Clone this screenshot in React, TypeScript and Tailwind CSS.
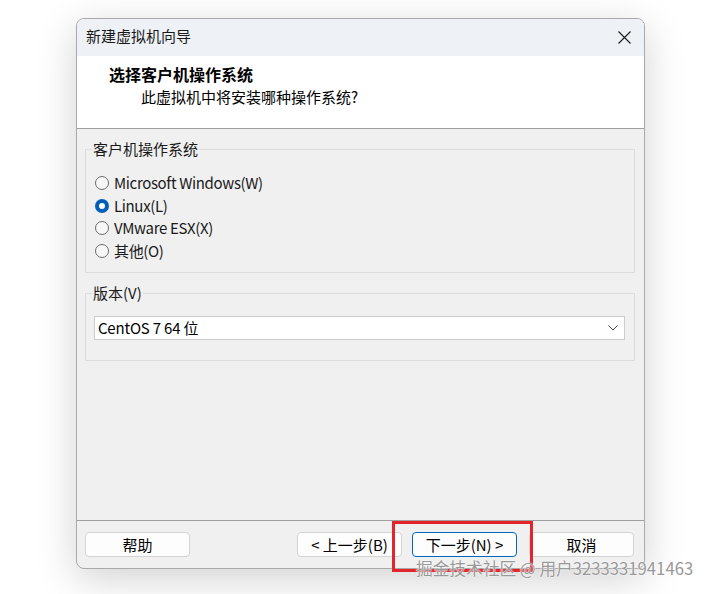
import React, { useState } from 'react';

const osOptions = [
  { key: 'windows', label: 'Microsoft Windows(W)' },
  { key: 'linux', label: 'Linux(L)' },
  { key: 'esx', label: 'VMware ESX(X)' },
  { key: 'other', label: '其他(O)' }
];

const Radio = ({ checked }: { checked: boolean }) =>
  checked ? (
    <span className="flex h-[14px] w-[14px] items-center justify-center rounded-full bg-[#005fb8]">
      <span className="h-[6px] w-[6px] rounded-full bg-white" />
    </span>
  ) : (
    <span className="h-[14px] w-[14px] rounded-full border border-[#6b6b6b] bg-[#f7f7f7]" />
  );

const Button = ({ label, primary }: { label: string; primary?: boolean }) => (
  <button
    className={`flex h-[25px] w-[105px] items-center justify-center rounded-[4px] border bg-[#fdfdfd] text-[15px] leading-[20px] text-black ${
      primary ? 'border-[#0067c0]' : 'border-[#d3d3d3]'
    }`}
  >
    {label}
  </button>
);

export default function App() {
  const [os, setOs] = useState('linux');

  return (
    <div
      className="relative h-[594px] w-[709px] overflow-hidden bg-white pl-[76px] pt-[18px]"
      style={{ fontFamily: '"Noto Sans CJK SC", "Noto Sans", sans-serif' }}
    >
      {/* dialog window */}
      <div className="flex h-[551px] w-[569px] flex-col overflow-hidden rounded-[8px] border border-[#a9a9a9] bg-[#f0f0f0] shadow-[0_10px_40px_rgba(0,0,0,0.18)]">
        {/* title bar */}
        <div className="flex h-[37px] items-center bg-[#eef2f6] pb-[4px]">
          <span className="pl-[9px] text-[15px] leading-[20px] text-[#1a1a1a]">新建虚拟机向导</span>
          <div className="ml-auto flex w-[40px] justify-center pt-[3px]">
            <svg width="13" height="13" viewBox="0 0 13 13" fill="none" stroke="#1b1b1b" strokeWidth="1.1">
              <path d="M0.5 0.5 L12.5 12.5 M12.5 0.5 L0.5 12.5" />
            </svg>
          </div>
        </div>

        {/* header */}
        <div className="h-[73px] border-b border-[#a0a0a0] bg-white pl-[32px] pt-[8px]">
          <div className="text-[16px] font-bold leading-[20px] text-black">选择客户机操作系统</div>
          <div className="mt-[3px] pl-[32px] text-[15px] leading-[20px] text-black">此虚拟机中将安装哪种操作系统?</div>
        </div>

        {/* body */}
        <div className="flex-1 px-[8px] pt-[10px]">
          <fieldset className="mr-[1px] border border-[#dcdcdc] pb-[10px] pl-[9px] pt-[13px]">
            <legend className="ml-[-3px] px-[1px] text-[15px] leading-[20px] text-[#1a1a1a]">客户机操作系统</legend>
            {osOptions.map((o) => (
              <label
                key={o.key}
                className="flex h-[22.5px] cursor-default items-center gap-[5px] text-[15px] text-[#1a1a1a]"
                onClick={() => setOs(o.key)}
              >
                <Radio checked={os === o.key} />
                <span className="leading-[20px] tracking-[-0.35px]">{o.label}</span>
              </label>
            ))}
          </fieldset>

          <fieldset className="mr-[1px] mt-[10px] border border-[#dcdcdc] pb-[20px] pl-[8px] pr-[9px] pt-[13px]">
            <legend className="ml-[-2px] px-[1px] text-[15px] leading-[20px] text-[#1a1a1a]">版本(V)</legend>
            <div className="flex h-[24px] items-center border border-[#cccccc] bg-white pl-[3px] pr-[6px]">
              <span className="text-[15px] leading-[20px] tracking-[-0.2px] text-black">CentOS 7 64 位</span>
              <svg className="ml-auto" width="10" height="6" viewBox="0 0 10 6" fill="none" stroke="#444" strokeWidth="1">
                <path d="M0.5 0.5 L5 5 L9.5 0.5" />
              </svg>
            </div>
          </fieldset>
        </div>

        {/* footer */}
        <div className="flex h-[48px] items-start border-t border-[#a0a0a0] pl-[8px] pr-[10px] pt-[11px]">
          <Button label="帮助" />
          <div className="ml-auto flex">
            <Button label="< 上一步(B)" />
            <div className="ml-[10px]">
              <Button label="下一步(N) >" primary />
            </div>
            <div className="ml-[12px]">
              <Button label="取消" />
            </div>
          </div>
        </div>
      </div>

      {/* annotation highlight */}
      <div className="absolute left-[392px] top-[521px] h-[51px] w-[141px] border-[3px] border-[#e3242b]" />

      {/* watermark */}
      <div
        className="absolute left-[416px] top-[557px] whitespace-nowrap text-[16.7px] leading-[22px] text-[#999999]"
        style={{ textShadow: '0 0 1px #fff, 0 0 2px #fff' }}
      >
        掘金技术社区 @ 用户3233331941463
      </div>
    </div>
  );
}
